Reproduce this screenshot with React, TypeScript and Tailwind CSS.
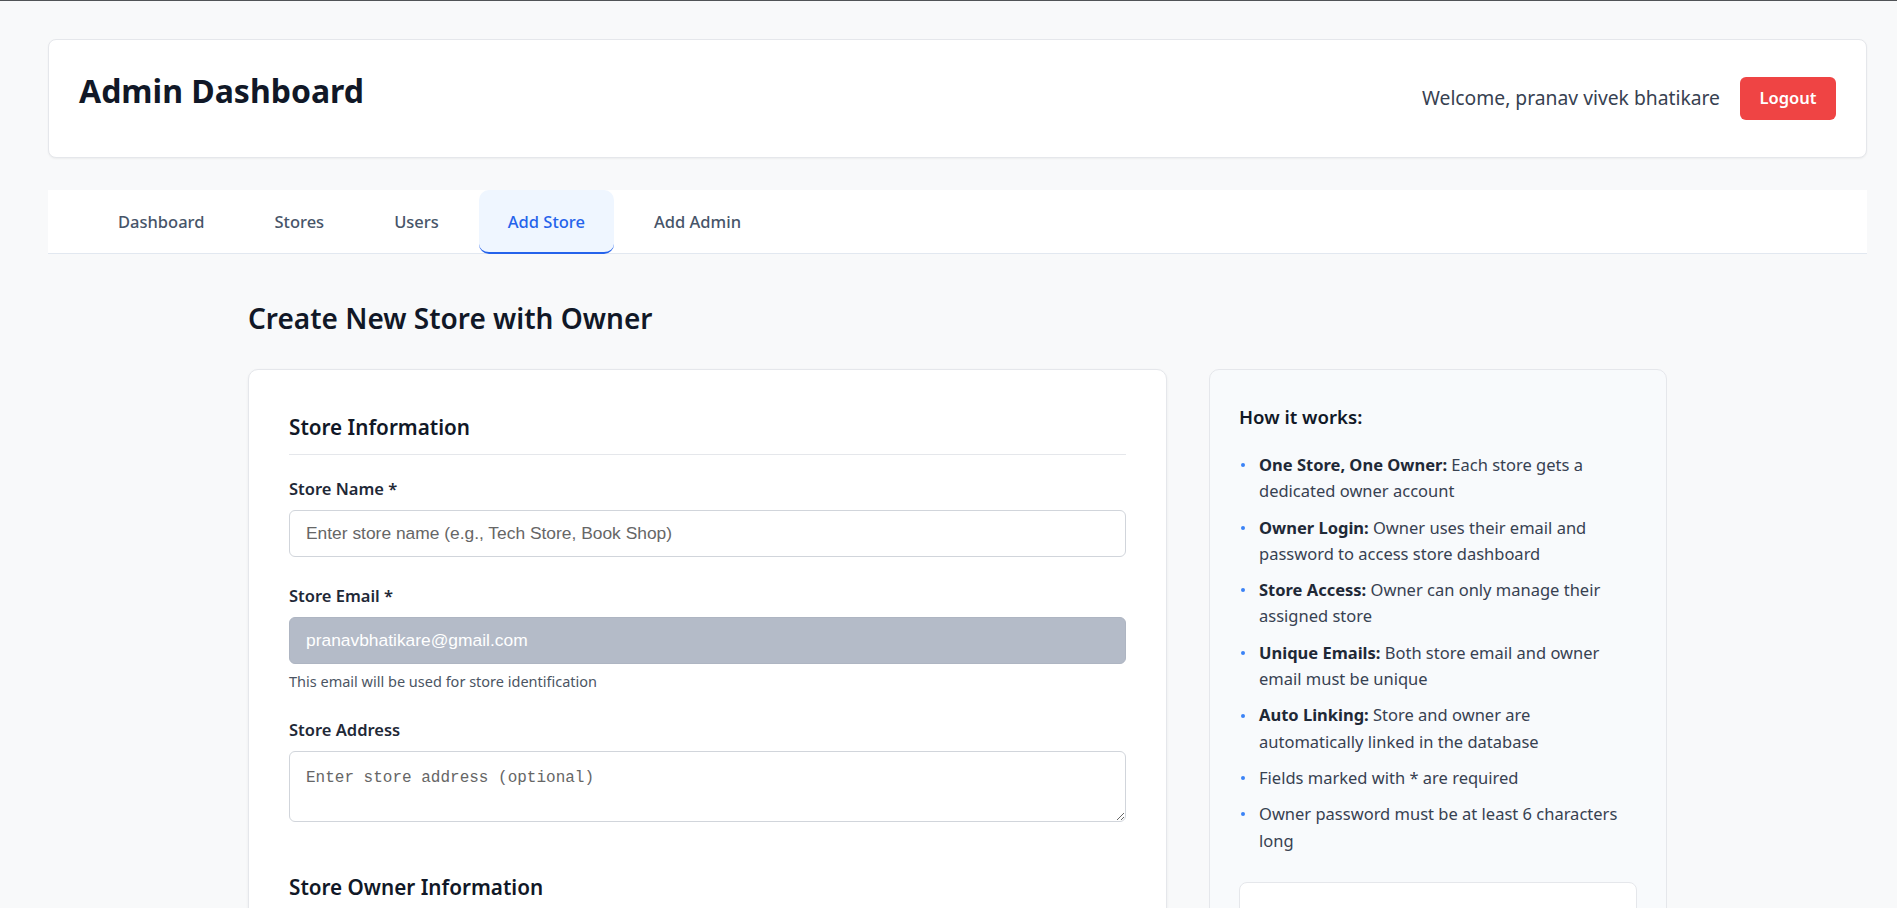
import React from "react";

const tabs = ["Dashboard", "Stores", "Users", "Add Store", "Add Admin"];

const info: { b?: string; l1: string; l2?: string }[] = [
  { b: "One Store, One Owner:", l1: " Each store gets a", l2: "dedicated owner account" },
  { b: "Owner Login:", l1: " Owner uses their email and", l2: "password to access store dashboard" },
  { b: "Store Access:", l1: " Owner can only manage their", l2: "assigned store" },
  { b: "Unique Emails:", l1: " Both store email and owner", l2: "email must be unique" },
  { b: "Auto Linking:", l1: " Store and owner are", l2: "automatically linked in the database" },
  { l1: "Fields marked with * are required" },
  { l1: "Owner password must be at least 6 characters", l2: "long" },
];

function Label({ children }: { children: React.ReactNode }) {
  return (
    <div className="mb-[9px] text-[16.5px] font-semibold leading-[24px] text-[#1f2937]">{children}</div>
  );
}

function TextInput({ placeholder }: { placeholder: string }) {
  return (
    <input
      placeholder={placeholder}
      className="block h-[47px] w-full rounded-[6px] border border-[#d1d5db] bg-white px-[16px] text-[17.4px] text-[#111827] outline-none placeholder:text-[#666666]"
      style={{ fontFamily: "'Liberation Sans', Arial, sans-serif" }}
    />
  );
}

export default function App() {
  return (
    <div
      className="h-[908px] w-full overflow-hidden bg-[#f8f9fa]"
      style={{ fontFamily: "'Noto Sans', 'Open Sans', sans-serif" }}
    >
      <div className="h-px w-full bg-[#505357]" />
      <div className="ml-[48px] w-[1819px] pt-[38px]">
        {/* Header card */}
        <div className="flex items-center justify-between rounded-[8px] border border-[#e5e7eb] bg-white p-[30px] shadow-[0_1px_2px_rgba(0,0,0,0.05)]">
          <h1 className="mb-[16px] text-[32px] font-bold leading-[41px] text-[#111827]">Admin Dashboard</h1>
          <div className="flex items-center gap-[20px]">
            <span className="text-[19.3px] text-[#374151]">Welcome, pranav vivek bhatikare</span>
            <button className="flex h-[43px] w-[96px] items-center justify-center rounded-[6px] bg-[#ef4444] text-[16.5px] font-semibold text-white">
              Logout
            </button>
          </div>
        </div>

        {/* Tabs */}
        <div className="mt-[32px] flex h-[64px] gap-[10px] border-b border-[#e2e8f0] bg-white px-[40px]">
          {tabs.map((t) => (
            <div
              key={t}
              className={
                t === "Add Store"
                  ? "flex h-[64px] items-center rounded-[10px] border-b-2 border-[#2563eb] bg-[#eff6ff] px-[29px] pt-[3px] text-[16.5px] font-medium text-[#2563eb]"
                  : "flex h-[63px] items-center px-[30px] pt-[1px] text-[16.5px] font-medium text-[#475569]"
              }
            >
              {t}
            </div>
          ))}
        </div>

        {/* Content */}
        <div className="mx-auto w-[1419px] pt-[46px]">
          <h2 className="mb-[33px] text-[28px] font-semibold leading-[36px] text-[#111827]">
            Create New Store with Owner
          </h2>
          <div className="grid grid-cols-[919px_458px] items-start gap-[42px]">
            {/* Form card */}
            <div className="rounded-[10px] border border-[#e5e7eb] bg-white px-[40px] pt-[43px] pb-[40px] shadow-[0_1px_3px_rgba(0,0,0,0.06)]">
              <h3 className="mb-[22px] border-b border-[#e5e7eb] pb-[13px] text-[20.7px] font-semibold leading-[28px] text-[#111827]">
                Store Information
              </h3>
              <div className="mb-[27px]">
                <Label>Store Name *</Label>
                <TextInput placeholder="Enter store name (e.g., Tech Store, Book Shop)" />
              </div>
              <div className="mb-[26px]">
                <Label>Store Email *</Label>
                <input
                  disabled
                  value="pranavbhatikare@gmail.com"
                  readOnly
                  className="block h-[47px] w-full rounded-[6px] border border-[#aeb5c2] bg-[#b4bbc8] px-[16px] text-[17.4px] text-white outline-none"
                  style={{ fontFamily: "'Liberation Sans', Arial, sans-serif" }}
                />
                <div className="mt-[6px] text-[14.5px] leading-[22px] text-[#4b5563]">
                  This email will be used for store identification
                </div>
              </div>
              <div>
                <Label>Store Address</Label>
                <textarea
                  placeholder="Enter store address (optional)"
                  className="block h-[71px] w-full rounded-[6px] border border-[#d1d5db] bg-white px-[16px] py-[14px] text-[16px] text-[#111827] outline-none placeholder:text-[#666666]"
                  style={{ fontFamily: "'Liberation Mono', 'DejaVu Sans Mono', monospace" }}
                />
              </div>

              <h3 className="mt-[51px] mb-[22px] border-b border-[#e5e7eb] pb-[13px] text-[20.7px] font-semibold leading-[28px] text-[#111827]">
                Store Owner Information
              </h3>
              <div className="mb-[27px]">
                <Label>Owner Name *</Label>
                <TextInput placeholder="Enter owner full name" />
              </div>
              <div className="mb-[27px]">
                <Label>Owner Email *</Label>
                <TextInput placeholder="Enter owner email" />
              </div>
              <div className="mb-[27px]">
                <Label>Owner Password *</Label>
                <TextInput placeholder="Enter password (min 6 characters)" />
              </div>
            </div>

            {/* Right info card */}
            <div className="rounded-[10px] border border-[#e5e7eb] bg-[#f8fafc] px-[29px] pt-[33px] pb-[29px]">
              <h4 className="mb-[21px] text-[18.6px] font-semibold leading-[28px] text-[#111827]">How it works:</h4>
              <ul className="flex flex-col gap-[10px]">
                {info.map((it, i) => (
                  <li key={i} className="flex text-[16.5px] leading-[26.3px] text-[#374151]">
                    <span className="flex h-[26.3px] w-[20px] shrink-0 items-center">
                      <span className="ml-[2px] h-[4px] w-[4px] rounded-full bg-[#3b82f6]" />
                    </span>
                    <span className="whitespace-nowrap">
                      {it.b && <strong className="font-bold text-[#1f2937]">{it.b}</strong>}
                      {it.l1}
                      {it.l2 && (
                        <>
                          <br />
                          {it.l2}
                        </>
                      )}
                    </span>
                  </li>
                ))}
              </ul>
              <div className="mt-[28px] rounded-[8px] border border-[#e5e7eb] bg-white p-[28px]">
                <div className="text-[16.5px] font-semibold text-[#111827]">Need help?</div>
                <div className="mt-[8px] text-[15px] text-[#4b5563]">
                  Contact the system administrator for assistance with store setup.
                </div>
              </div>
            </div>
          </div>
        </div>
      </div>
    </div>
  );
}
